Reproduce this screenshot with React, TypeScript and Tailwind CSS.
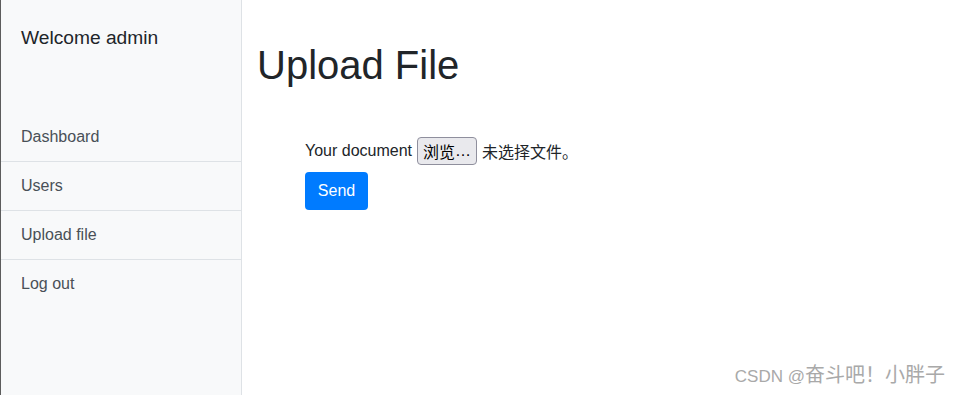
import React from 'react';

const menu = ['Dashboard', 'Users', 'Upload file', 'Log out'];

const App: React.FC = () => {
  return (
    <div
      className="relative flex h-[395px] w-[958px] overflow-hidden bg-white text-[#212529]"
      style={{ fontFamily: '"Liberation Sans", Arial, sans-serif' }}
    >
      {/* sidebar */}
      <div className="w-[242px] shrink-0 border-l border-r border-l-[#5c5c5c] border-r-[#dee2e6] bg-[#f8f9fa]">
        <div className="h-[113px] px-5 pt-[24px] text-[19.2px] leading-[1.5]">Welcome admin</div>
        <div className="flex flex-col">
          {menu.map((item, i) => (
            <div
              key={item}
              className={`px-5 py-3 text-base leading-6 text-[#495057] ${
                i < menu.length - 1 ? 'border-b border-[#dee2e6]' : ''
              }`}
            >
              {item}
            </div>
          ))}
        </div>
      </div>

      {/* content */}
      <div className="flex-1 px-[15px]">
        <h1 className="mt-[41px] text-[40px] leading-[1.2] font-normal">Upload File</h1>
        <form className="mt-[48px] pl-12" onSubmit={(e) => e.preventDefault()}>
          <div className="flex h-[28px] items-center text-base">
            <span>Your document</span>
            <button
              type="button"
              className="ml-[5px] flex h-[28px] items-center rounded-[4px] border border-[#8f8f9d] bg-[#e9e9ed] px-[5px] text-base text-black"
            >
              <span style={{ fontFamily: '"Noto Sans CJK SC", sans-serif' }}>浏览</span>
              <span>…</span>
            </button>
            <span className="ml-[5px]" style={{ fontFamily: '"Noto Sans CJK SC", sans-serif' }}>
              未选择文件。
            </span>
          </div>
          <button
            type="submit"
            className="mt-[7px] flex h-[38px] w-[63px] items-center justify-center rounded-[4px] bg-[#007bff] text-base text-white"
          >
            Send
          </button>
        </form>
      </div>

      {/* watermark */}
      <div className="absolute right-[13px] bottom-[6px] flex items-baseline text-[#a9a9a9]">
        <span className="text-[17px]">CSDN @</span>
        <span className="text-[20px]" style={{ fontFamily: '"Noto Sans CJK SC", sans-serif' }}>
          奋斗吧！小胖子
        </span>
      </div>
    </div>
  );
};

export default App;
